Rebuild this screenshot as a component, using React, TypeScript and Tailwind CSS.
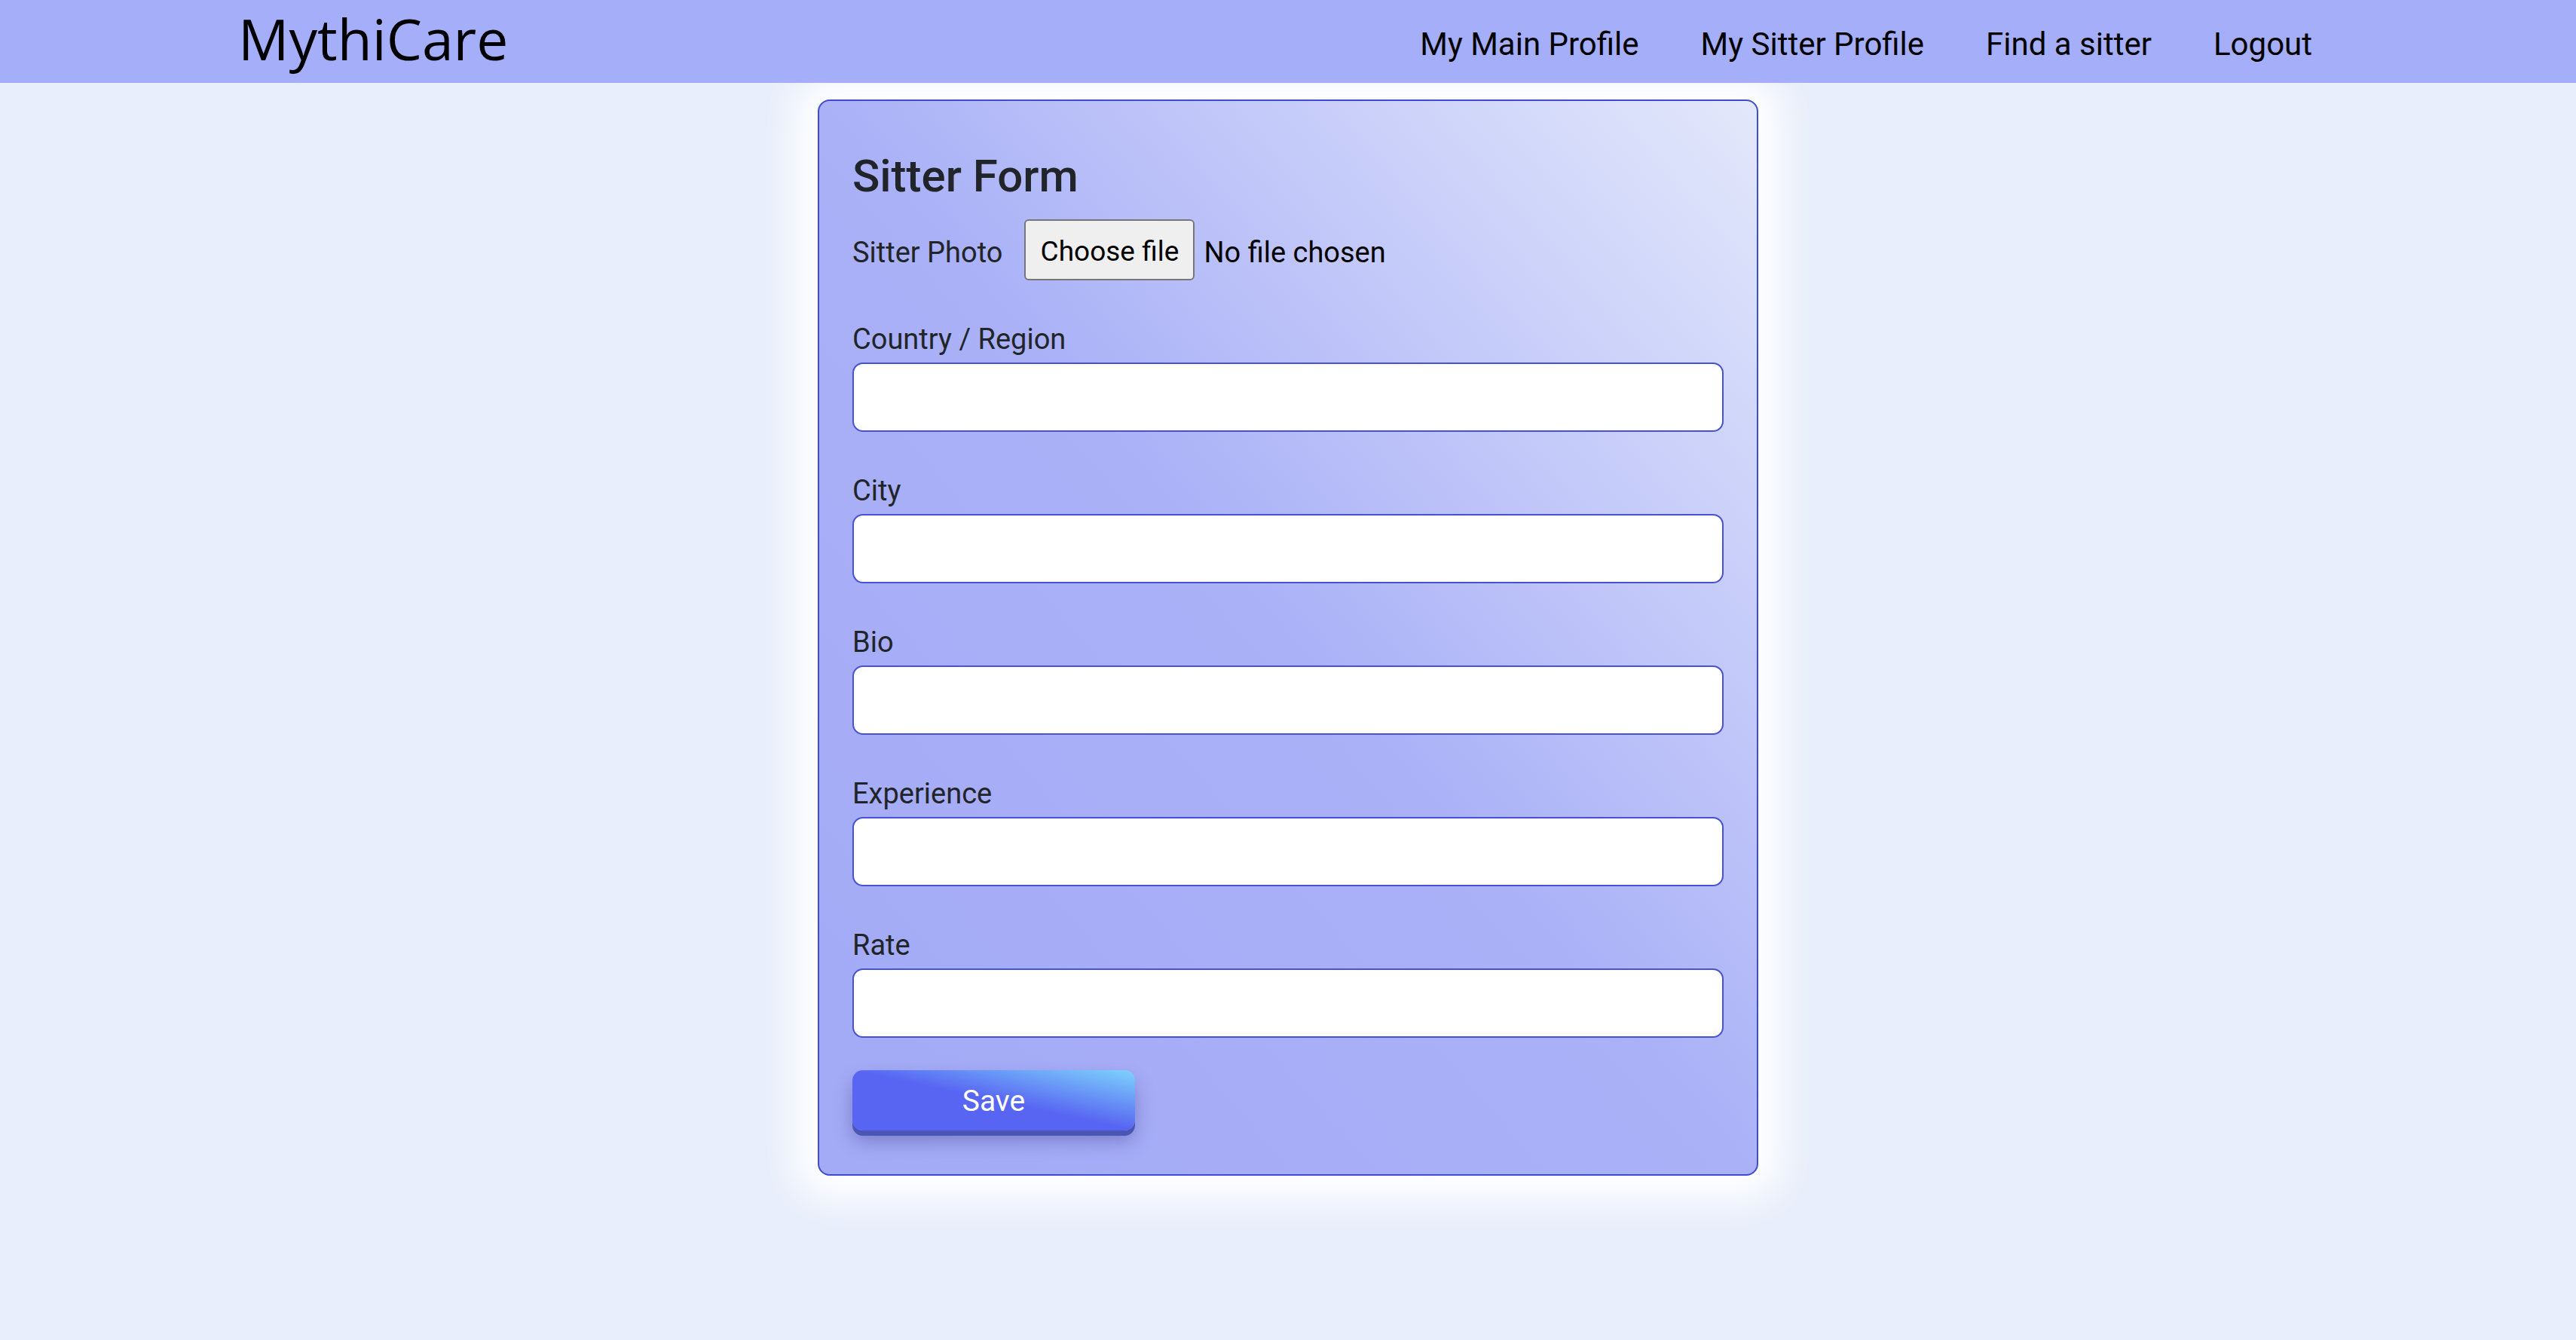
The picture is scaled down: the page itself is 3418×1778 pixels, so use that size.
const links = ["My Main Profile", "My Sitter Profile", "Find a sitter", "Logout"];
const fields = ["Country / Region", "City", "Bio", "Experience", "Rate"];

export default function App() {
  return (
    <div className="min-h-screen bg-[#e8eefb] font-['Roboto',sans-serif] text-[#212529]">
      {/* top bar */}
      <nav className="relative z-10 flex h-[110px] items-center justify-between bg-[#a5aef8] pl-[316px] pr-[350px]">
        <a className="mb-[8px] font-['Open_Sans',sans-serif] text-[75px] leading-none text-black">MythiCare</a>
        <ul className="mt-[8px] flex items-center gap-[82px] text-[42px] leading-none text-black">
          {links.map((l) => (
            <li key={l}>
              <a>{l}</a>
            </li>
          ))}
        </ul>
      </nav>

      <main className="flex justify-center pt-[22px]">
        <form className="w-[1248px] rounded-[16px] border-2 border-[#3f4bd2] bg-[linear-gradient(to_bottom_left,#e3e8fb_0%,#aab1f7_50%,#a3aaf6_100%)] px-[44px] pt-[66px] pb-[58px] shadow-[0_0_50px_30px_#ffffff]">
          <h2 className="text-[60px] font-medium leading-[68px]">Sitter Form</h2>

          <div className="mt-[23px] flex h-[81px] items-center">
            <span className="pt-[6px] text-[38px] leading-[54px]">Sitter Photo</span>
            <button
              type="button"
              className="ml-[29px] flex h-[81px] w-[226px] items-center justify-center whitespace-nowrap rounded-[6px] border-2 border-[#767676] bg-[#efefef] pt-[4px] text-[37px] leading-none text-black"
            >
              Choose file
            </button>
            <span className="ml-[12px] pt-[6px] text-[38px] leading-[54px] text-black">No file chosen</span>
          </div>

          <div className="mt-[51px] flex flex-col gap-[51px]">
            {fields.map((f) => (
              <div key={f} className="flex flex-col">
                <label className="mb-[4px] text-[38px] leading-[54px]">{f}</label>
                <input
                  type="text"
                  className="h-[92px] w-full rounded-[14px] border-2 border-[#4651d6] bg-white px-4 text-[36px] outline-none"
                />
              </div>
            ))}
          </div>

          <button
            type="button"
            className="mt-[43px] h-[80px] w-[375px] rounded-[14px] bg-[linear-gradient(to_top_right,#5865f2_50%,#7dd3fc_100%)] pt-[2px] text-[39px] leading-none text-white shadow-[0_7px_0_#4a55b4,0_14px_24px_rgba(70,70,150,0.45)]"
          >
            Save
          </button>
        </form>
      </main>
    </div>
  );
}
